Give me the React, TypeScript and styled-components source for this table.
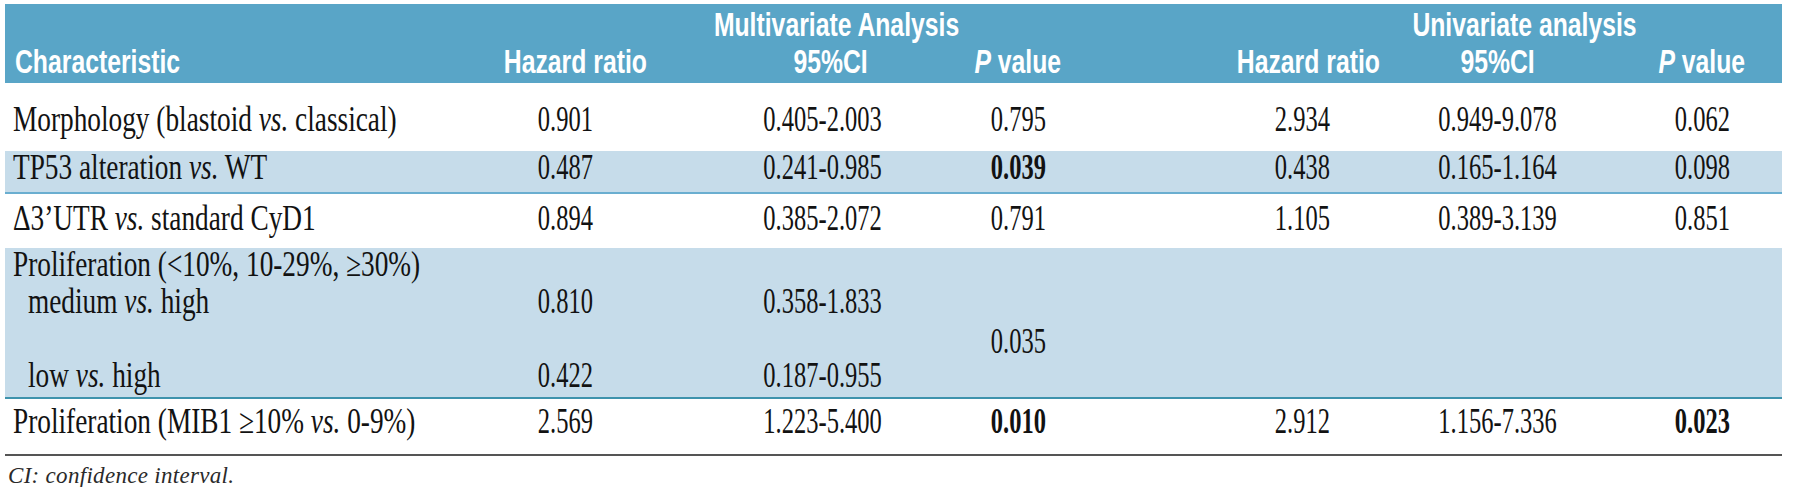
import React from "react";
import styled, { createGlobalStyle } from "styled-components";

const GlobalStyle = createGlobalStyle`
  html, body { margin: 0; padding: 0; background: #ffffff; }
  body { font-family: "Liberation Serif", "Times New Roman", serif; color: #121212; }
`;

const Page = styled.div`
  width: 1800px;
  box-sizing: border-box;
  padding: 4px 18px 0 5px;
`;

const Table = styled.table`
  width: 100%;
  border-collapse: collapse;
  table-layout: fixed;
`;

const HeadRow = styled.tr<{ $h: number }>`
  background: #59a5c7;
  height: ${(p) => p.$h}px;
`;

const HeadCell = styled.th<{ $pb: number; $pl?: number; $left?: boolean }>`
  padding: 0 0 ${(p) => p.$pb}px ${(p) => p.$pl ?? 0}px;
  vertical-align: bottom;
  text-align: ${(p) => (p.$left ? "left" : "center")};
  white-space: nowrap;
  color: #ffffff;
  font-family: "Liberation Sans", Arial, sans-serif;
  font-weight: 700;
  font-size: 33px;
  line-height: 30px;
`;

const HeadText = styled.span<{ $left?: boolean }>`
  display: inline-block;
  transform: scaleX(0.75);
  transform-origin: ${(p) => (p.$left ? "left center" : "center")};
  i { font-style: italic; }
`;

const Row = styled.tr<{ $h: number; $band?: boolean; $line?: string }>`
  height: ${(p) => p.$h}px;
  background: ${(p) => (p.$band ? "#c6dcea" : "#ffffff")};
  border-bottom: ${(p) => p.$line ?? "none"};
`;

const Cell = styled.td<{ $pb: number; $pl?: number; $left?: boolean; $middle?: boolean }>`
  padding: 0 0 ${(p) => p.$pb}px ${(p) => p.$pl ?? 0}px;
  vertical-align: ${(p) => (p.$middle ? "middle" : "bottom")};
  text-align: ${(p) => (p.$left ? "left" : "center")};
  white-space: nowrap;
  font-size: 35px;
  line-height: 33px;
`;

const Label = styled.span`
  display: inline-block;
  transform: scaleX(0.78);
  transform-origin: left center;
  i { font-style: italic; }
`;

const Num = styled.span<{ $bold?: boolean }>`
  display: inline-block;
  transform: scaleX(0.7);
  transform-origin: center;
  font-weight: ${(p) => (p.$bold ? 700 : 400)};
`;

const Note = styled.p`
  margin: 9px 0 0 3px;
  font-style: italic;
  font-size: 23px;
  line-height: 22px;
  letter-spacing: 0.3px;
  color: #2a2a2a;
`;

type Vals = [string, string, string, string, string, string];

const DataCells = ({ v, pb, bold = [] }: { v: Vals; pb: number; bold?: number[] }) => (
  <>
    <Cell $pb={pb}><Num $bold={bold.includes(0)}>{v[0]}</Num></Cell>
    <Cell $pb={pb}><Num $bold={bold.includes(1)}>{v[1]}</Num></Cell>
    <Cell $pb={pb}><Num $bold={bold.includes(2)}>{v[2]}</Num></Cell>
    <Cell $pb={pb} />
    <Cell $pb={pb}><Num $bold={bold.includes(3)}>{v[3]}</Num></Cell>
    <Cell $pb={pb}><Num $bold={bold.includes(4)}>{v[4]}</Num></Cell>
    <Cell $pb={pb} $pl={26}><Num $bold={bold.includes(5)}>{v[5]}</Num></Cell>
  </>
);

export default function App() {
  return (
    <Page>
      <GlobalStyle />
      <Table>
        <colgroup>
          <col style={{ width: 435 }} />
          <col style={{ width: 250 }} />
          <col style={{ width: 266 }} />
          <col style={{ width: 124 }} />
          <col style={{ width: 125 }} />
          <col style={{ width: 195 }} />
          <col style={{ width: 196 }} />
          <col style={{ width: 186 }} />
        </colgroup>
        <thead>
          <HeadRow $h={38}>
            <HeadCell $pb={2} />
            <HeadCell $pb={2} $pl={154} colSpan={3}><HeadText>Multivariate Analysis</HeadText></HeadCell>
            <HeadCell $pb={2} />
            <HeadCell $pb={2} $pl={61} colSpan={3}><HeadText>Univariate analysis</HeadText></HeadCell>
          </HeadRow>
          <HeadRow $h={41}>
            <HeadCell $pb={6} $pl={10} $left><HeadText $left>Characteristic</HeadText></HeadCell>
            <HeadCell $pb={6} $pl={20}><HeadText>Hazard ratio</HeadText></HeadCell>
            <HeadCell $pb={6} $pl={16}><HeadText>95%CI</HeadText></HeadCell>
            <HeadCell $pb={6}><HeadText><i>P</i> value</HeadText></HeadCell>
            <HeadCell $pb={6} />
            <HeadCell $pb={6} $pl={8}><HeadText>Hazard ratio</HeadText></HeadCell>
            <HeadCell $pb={6}><HeadText>95%CI</HeadText></HeadCell>
            <HeadCell $pb={6} $pl={26}><HeadText><i>P</i> value</HeadText></HeadCell>
          </HeadRow>
        </thead>
        <tbody>
          <Row $h={68}>
            <Cell $pb={15} $pl={8} $left><Label>Morphology (blastoid <i>vs.</i> classical)</Label></Cell>
            <DataCells pb={15} v={["0.901", "0.405-2.003", "0.795", "2.934", "0.949-9.078", "0.062"]} />
          </Row>
          <Row $h={37} $band $line="2px solid #6aaed0">
            <Cell $pb={8} $pl={8} $left><Label>TP53 alteration <i>vs.</i> WT</Label></Cell>
            <DataCells pb={8} bold={[2]} v={["0.487", "0.241-0.985", "0.039", "0.438", "0.165-1.164", "0.098"]} />
          </Row>
          <Row $h={55}>
            <Cell $pb={13} $pl={8} $left><Label>Δ3’UTR <i>vs.</i> standard CyD1</Label></Cell>
            <DataCells pb={13} v={["0.894", "0.385-2.072", "0.791", "1.105", "0.389-3.139", "0.851"]} />
          </Row>
          <Row $h={37} $band>
            <Cell $pb={4} $pl={8} $left colSpan={8}><Label>Proliferation (&lt;10%, 10-29%, ≥30%)</Label></Cell>
          </Row>
          <Row $h={38} $band>
            <Cell $pb={5} $pl={23} $left><Label>medium <i>vs.</i> high</Label></Cell>
            <Cell $pb={5}><Num>0.810</Num></Cell>
            <Cell $pb={5}><Num>0.358-1.833</Num></Cell>
            <Cell $pb={0} $middle rowSpan={2}><Num>0.035</Num></Cell>
            <Cell $pb={5} colSpan={4} />
          </Row>
          <Row $h={75} $band $line="2px solid #3e93ad">
            <Cell $pb={5} $pl={23} $left><Label>low <i>vs.</i> high</Label></Cell>
            <Cell $pb={5}><Num>0.422</Num></Cell>
            <Cell $pb={5}><Num>0.187-0.955</Num></Cell>
            <Cell $pb={5} colSpan={4} />
          </Row>
          <Row $h={57} $line="2px solid #555555">
            <Cell $pb={16} $pl={8} $left><Label>Proliferation (MIB1 ≥10% <i>vs.</i> 0-9%)</Label></Cell>
            <DataCells pb={16} bold={[2, 5]} v={["2.569", "1.223-5.400", "0.010", "2.912", "1.156-7.336", "0.023"]} />
          </Row>
        </tbody>
      </Table>
      <Note>CI: confidence interval.</Note>
    </Page>
  );
}
